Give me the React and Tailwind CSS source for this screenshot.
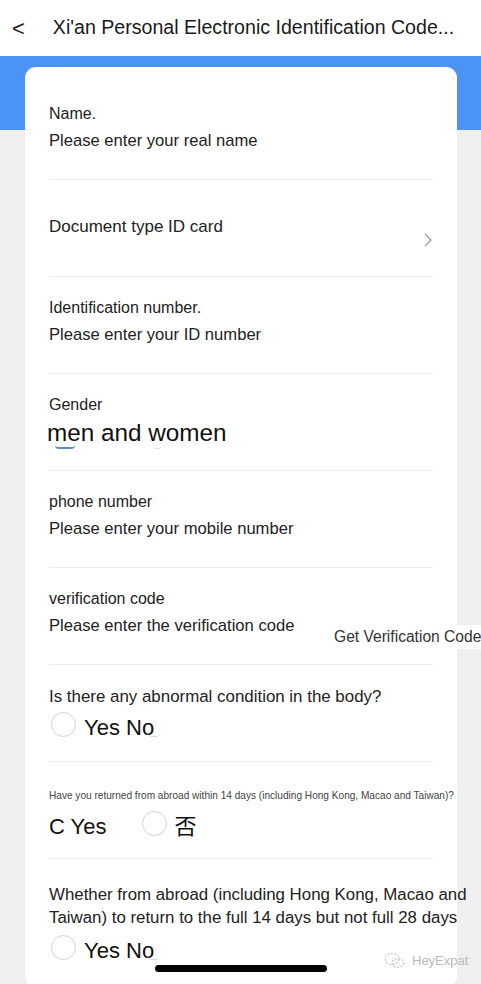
import React from "react";

const font = { fontFamily: '"Liberation Sans", "Noto Sans CJK SC", sans-serif' };

const Radio = () => (
  <span className="inline-block w-[25px] h-[25px] rounded-full border-[1.5px] border-[#d4d4d4] bg-white shrink-0" />
);

const FaintArc = () => (
  <span className="absolute left-[98px] top-[20px] w-[14px] h-[5px] border-b border-[#d8d8d8] rounded-b-full" />
);

const Row = ({ children, last }) => (
  <div className={`mx-6 h-[97px] ${last ? "" : "border-b border-[#ececec]"} relative`}>
    {children}
  </div>
);

const LabelRow = ({ label, placeholder }) => (
  <Row>
    <div className="pt-[22px] text-[16px] leading-[18px] text-[#222]">{label}</div>
    <div className="mt-2 text-[16.6px] leading-[20px] text-[#222]">{placeholder}</div>
  </Row>
);

export default function App() {
  return (
    <div className="w-[481px] h-[984px] overflow-hidden bg-[#efefef] relative" style={font}>
      {/* header */}
      <div className="h-[56px] bg-white flex items-center">
        <span className="ml-[12px] text-[22px] text-[#222] font-light">&lt;</span>
        <span className="ml-[28px] text-[19.6px] text-[#1a1a1a] whitespace-nowrap">
          Xi'an Personal Electronic Identification Code...
        </span>
      </div>

      <div className="h-[74px] bg-[#4b94f6]" />

      {/* card */}
      <div className="absolute left-[25px] top-[67px] w-[432px] h-[920px] bg-white rounded-[11px]">
        {/* name */}
        <div className="mx-6 h-[113px] border-b border-[#ececec]">
          <div className="pt-[38px] text-[16px] leading-[18px] text-[#222]">Name.</div>
          <div className="mt-[8px] text-[16.6px] leading-[20px] text-[#222]">Please enter your real name</div>
        </div>

        {/* document type */}
        <Row>
          <div className="pt-[37px] text-[17px] leading-[20px] text-[#222]">Document type ID card</div>
          <svg className="absolute right-0 top-[52px]" width="10" height="16" viewBox="0 0 10 16">
            <path d="M2 2 L8 8 L2 14" fill="none" stroke="#999" strokeWidth="1.3" />
          </svg>
        </Row>

        <LabelRow label="Identification number." placeholder="Please enter your ID number" />

        {/* gender */}
        <Row>
          <div className="pt-[22px] text-[16px] leading-[18px] text-[#222]">Gender</div>
          <div className="mt-[5px] -ml-[2px] text-[24.3px] leading-[28px] text-[#111]">men and women</div>
          <span className="absolute left-[6px] top-[71px] w-[20px] h-[4px] border-b-2 border-[#5b8fb8] rounded-b-full" />
          <span className="absolute left-[104px] top-[72px] w-[8px] h-[3px] border-b border-[#dde3ea] rounded-b-full" />
        </Row>

        <LabelRow label="phone number" placeholder="Please enter your mobile number" />

        {/* verification code */}
        <Row>
          <div className="pt-[22px] text-[16px] leading-[18px] text-[#222]">verification code</div>
          <div className="mt-2 text-[16.6px] leading-[20px] text-[#222]">Please enter the verification code</div>
          <div className="absolute left-[281px] top-[57px] bg-white pl-[4px] pr-[10px] py-[2px] text-[15.6px] leading-[20px] text-[#333] whitespace-nowrap">
            Get Verification Code
          </div>
        </Row>

        {/* abnormal condition */}
        <Row>
          <div className="pt-[22px] text-[16.9px] leading-[20px] text-[#222]">Is there any abnormal condition in the body?</div>
          <div className="mt-[5px] flex items-center relative">
            <span className="ml-[2px]"><Radio /></span>
            <span className="ml-[8px] text-[22px] leading-[26px] text-[#111]">Yes No</span>
            <FaintArc />
          </div>
        </Row>

        {/* returned from abroad */}
        <Row>
          <div className="pt-[28px] text-[10.1px] leading-[12px] text-[#444] whitespace-nowrap">
            Have you returned from abroad within 14 days (including Hong Kong, Macao and Taiwan)?
          </div>
          <div className="mt-[9px] flex items-center">
            <span className="text-[22px] leading-[28px] text-[#111]">C Yes</span>
            <span className="ml-[35px]"><Radio /></span>
            <span className="ml-[8px] text-[22px] leading-[28px] text-[#111]">否</span>
          </div>
        </Row>

        {/* 14-28 days */}
        <Row last>
          <div className="pt-[24px] text-[16.85px] leading-[23px] text-[#222] whitespace-nowrap">
            <div>Whether from abroad (including Hong Kong, Macao and</div>
            <div>Taiwan) to return to the full 14 days but not full 28 days</div>
          </div>
          <div className="mt-[6px] flex items-center relative">
            <span className="ml-[2px]"><Radio /></span>
            <span className="ml-[8px] text-[22px] leading-[26px] text-[#111]">Yes No</span>
            <FaintArc />
          </div>
        </Row>
      </div>

      {/* watermark */}
      <div className="absolute left-[384px] top-[951px] flex items-center gap-[6px]">
        <svg width="22" height="18" viewBox="0 0 22 18">
          <ellipse cx="8" cy="7" rx="7" ry="5.5" fill="none" stroke="#c8c8c8" strokeWidth="1.2" strokeDasharray="2 1.5" />
          <ellipse cx="14" cy="11" rx="6" ry="4.5" fill="none" stroke="#c8c8c8" strokeWidth="1.2" strokeDasharray="2 1.5" />
        </svg>
        <span className="text-[13px] text-[#b9b9b9]">HeyExpat</span>
      </div>

      {/* home indicator */}
      <div className="absolute left-[155px] top-[965px] w-[172px] h-[7px] rounded-full bg-black" />
    </div>
  );
}
